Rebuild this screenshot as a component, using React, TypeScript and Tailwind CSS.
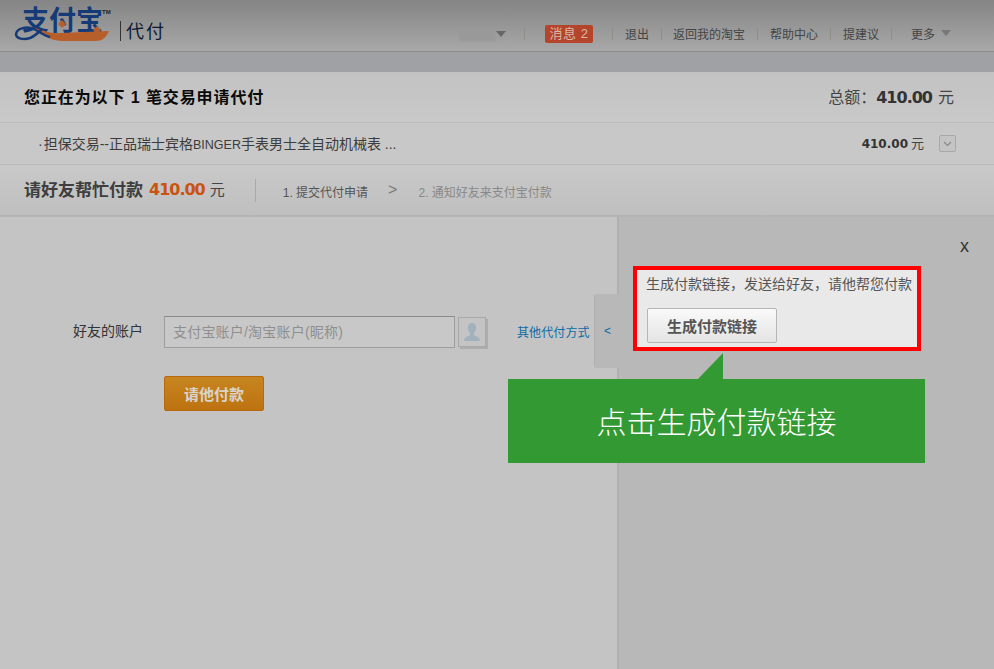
import React from 'react';

const font = "font-['Liberation_Sans','Noto_Sans_CJK_SC',sans-serif]";

const Sep = () => <span className="block w-px h-[12px] bg-[#8f8f85]" />;

const Logo = () => (
  <div className="relative w-[120px] h-[51px] shrink-0">
    <span className="absolute left-[22px] top-[5px] text-[27px] leading-[32px] font-bold text-[#153a78] whitespace-nowrap">支付宝</span>
    <span className="absolute left-[102px] top-[8px] text-[6px] leading-[8px] font-bold text-[#222]">TM</span>
    <svg className="absolute left-0 top-0" width="120" height="51" viewBox="0 0 120 51">
      <path d="M30 27C42 29 48 34 60 33L109 31C106 38 102 41 95 41H62C48 41 42 32 30 27Z" fill="#b65f2a" />
      <path d="M16 34C17 28 27 26 34 29C40 32 44 36 50 37" fill="none" stroke="#153a78" strokeWidth="2.5" />
      <path d="M16 34C16 39 24 40 30 38C35 36 38 33 42 29" fill="none" stroke="#153a78" strokeWidth="2.5" />
      <path d="M62 20l4 4-4 4-4-4zM97 26l4 4-4 4-4-4z" fill="#b65f2a" />
    </svg>
  </div>
);

const App: React.FC = () => {
  return (
    <div className={`relative w-[994px] h-[669px] overflow-hidden bg-[#c4c4c4] ${font}`}>
      <header className="h-[52px] border-b border-[#8c8c8c] bg-gradient-to-b from-[#858585] to-[#a8a8a8] flex items-start">
        <Logo />
        <span className="w-px h-[20px] bg-[#333] mt-[21px]" />
        <span className="text-[18px] tracking-[2px] leading-[22px] mt-[21px] ml-[5px] text-[#0c1a33]">代付</span>
        <nav className="absolute left-[459px] top-[25px] h-[18px] flex items-center text-[12px] text-[#444]">
          <span className="w-[36px] h-[14px] bg-[#999] blur-[1px]" />
          <span className="ml-[1px] border-x-[5px] border-x-transparent border-t-[6px] border-t-[#666]" />
          <span className="ml-[18px]"><Sep /></span>
          <span className="ml-[20px] w-[48px] h-[18px] rounded-[2px] bg-[#b5452a] text-[#d8b8a8] text-[13px] tracking-[0.5px] text-center leading-[18px]">消息 2</span>
          <span className="ml-[19px]"><Sep /></span>
          <span className="ml-[12px] pt-[2px]">退出</span>
          <span className="ml-[12px]"><Sep /></span>
          <span className="ml-[11px] pt-[2px]">返回我的淘宝</span>
          <span className="ml-[12px]"><Sep /></span>
          <span className="ml-[12px] pt-[2px]">帮助中心</span>
          <span className="ml-[12px]"><Sep /></span>
          <span className="ml-[12px] pt-[2px]">提建议</span>
          <span className="ml-[12px]"><Sep /></span>
          <span className="ml-[19px] pt-[2px]">更多</span>
          <span className="ml-[6px] mb-[2px] border-x-[5px] border-x-transparent border-t-[6px] border-t-[#777]" />
        </nav>
      </header>

      <div className="h-[20px] bg-[#9fa1a5]" />

      <section className="h-[51px] border-b border-[#bcbcbc] bg-gradient-to-b from-[#c2c2c2] to-[#c9c9c9] flex items-center justify-between pl-[24px] pr-[40px]">
        <h1 className="pt-[2px] text-[16px] font-bold tracking-[0.9px] text-[#0a0a0a]">您正在为以下 1 笔交易申请代付</h1>
        <div className="pt-[2px] text-[16px] text-[#444] flex items-baseline">
          <span>总额：</span>
          <span className="font-bold font-['DejaVu_Sans',sans-serif] text-[16px] tracking-[-1px] text-[#333]">410.00</span>
          <span className="ml-[6px]">元</span>
        </div>
      </section>

      <section className="h-[42px] border-b border-[#bcbcbc] bg-[#c8c8c8] flex items-center pl-[38px] pr-[38px]">
        <span className="pt-[2px] text-[14px] text-[#3c3c3c] flex-1 whitespace-nowrap">·<span className="ml-[1px]">担保交易--正品瑞士宾格</span><span className="text-[12.5px]">BINGER</span>手表男士全自动机械表 ...</span>
        <span className="text-[12px] font-bold font-['DejaVu_Sans',sans-serif] text-[#333]">410.00</span>
        <span className="text-[13px] text-[#444] ml-[3px]">元</span>
        <span className="ml-[15px] w-[17px] h-[17px] rounded-[2px] border border-[#a8a8a8] bg-[#c4c4c4] flex items-center justify-center">
          <svg width="9" height="6" viewBox="0 0 9 6"><path d="M1 1l3.500 3.500L8 1" fill="none" stroke="#888" strokeWidth="1.2" /></svg>
        </span>
      </section>

      <section className="h-[52px] border-b-2 border-[#b4b4b4] bg-gradient-to-b from-[#c9c9c9] to-[#bfbfbf] flex items-center pl-[24px]">
        <span className="pt-[2px] text-[17px] font-bold text-[#3e3e3e]">请好友帮忙付款</span>
        <span className="ml-[6px] text-[16px] tracking-[-1px] font-bold font-['DejaVu_Sans',sans-serif] text-[#c9530f]">410.00</span>
        <span className="ml-[5px] text-[15px] text-[#444]">元</span>
        <span className="ml-[30px] w-px h-[23px] bg-[#a8a8a8]" />
        <span className="ml-[27px] pt-[6px] text-[12px] text-[#555]">1. 提交代付申请</span>
        <span className="ml-[20px] text-[16px] text-[#777]">&gt;</span>
        <span className="ml-[21px] pt-[6px] text-[12px] text-[#888]">2. 通知好友来支付宝付款</span>
      </section>

      <main className="flex h-[452px]">
        <div className="w-[617px] bg-[#c4c4c4] pl-[73px] pt-[99px]">
          <div className="flex items-center h-[32px]">
            <span className="w-[91px] pb-[2px] text-[14px] text-[#333]">好友的账户</span>
            <div className="w-[291px] h-[32px] border border-[#9e9e9e] border-t-[#8a8a8a] bg-[#c8c8c8] pl-[8px] text-[14px] tracking-[0.2px] leading-[30px] text-[#8f8f8f]">支付宝账户/淘宝账户(昵称)</div>
            <div className="ml-[3px] w-[28px] h-[30px] border border-[#a8a8a8] shadow-[2px_2px_0_#adadad] flex items-center justify-center">
              <svg width="20" height="22" viewBox="0 0 20 22"><path d="M10 2c3 0 4.500 2.500 4 6-.3 2-1 3-2 4v2c2 1.500 6 2 6 6H2c0-4 4-4.500 6-6v-2c-1-1-1.700-2-2-4-.5-3.500 1-6 4-6z" fill="#a3b1bf" /></svg>
            </div>
            <span className="ml-[31px] pt-[1px] text-[12px] tracking-[0.1px] text-[#0c6aa5] whitespace-nowrap">其他代付方式</span>
          </div>
          <button className="mt-[28px] ml-[91px] block w-[100px] h-[35px] pt-[3px] rounded-[2px] border border-[#b8690f] bg-gradient-to-b from-[#c7851f] to-[#bd7210] text-[15px] font-bold text-[#d8d4cc]">请他付款</button>
        </div>
        <div className="flex-1 border-l-2 border-[#b0b0b0] bg-[#b8b8b8] flex justify-end">
          <span className="mr-[25px] mt-[19px] text-[18px] leading-[20px] text-[#333]">x</span>
        </div>
      </main>

      {/* collapse tab */}
      <div className="absolute left-[594px] top-[294px] w-[25px] h-[74px] rounded-l-[3px] bg-[#b8b8b8] border-l border-[#b0b0b0] flex items-center pl-[9px] text-[12px] text-[#0c6aa5]">&lt;</div>

      {/* highlighted box */}
      <div className="absolute left-[633px] top-[266px] w-[288px] h-[85px] border-[4px] border-[#ff0000] bg-[#e9e9e9] pl-[9px]">
        <p className="mt-[4px] text-[14px] leading-[20px] text-[#555] whitespace-nowrap">生成付款链接，发送给好友，请他帮您付款</p>
        <button className="mt-[14px] block ml-px w-[130px] h-[35px] pt-[3px] rounded-[2px] border border-[#b5b5b5] bg-gradient-to-b from-[#fafafa] to-[#e4e4e4] text-[15px] font-bold text-[#555]">生成付款链接</button>
      </div>

      {/* callout */}
      <svg className="absolute left-[697px] top-[353px]" width="26" height="27" viewBox="0 0 26 27"><path d="M26 0v27H0z" fill="#339933" /></svg>
      <div className="absolute left-[508px] top-[379px] w-[417px] h-[84px] pt-[3px] bg-[#339933] flex items-center justify-center text-[30px] font-light text-white">点击生成付款链接</div>
    </div>
  );
};

export default App;
